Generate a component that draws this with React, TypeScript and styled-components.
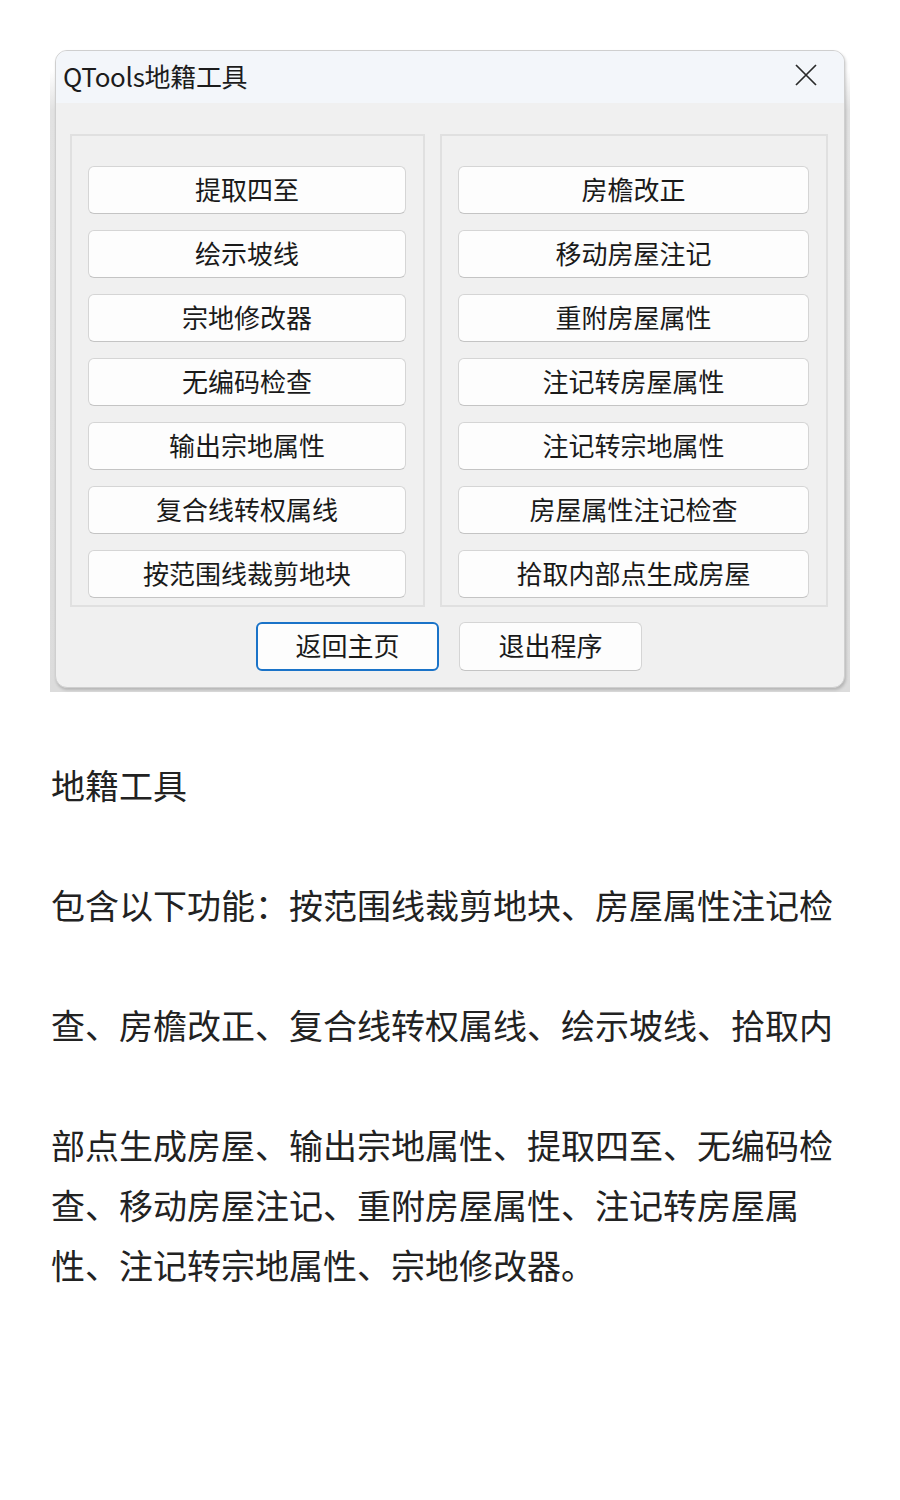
import styled, { createGlobalStyle } from 'styled-components';

const GlobalStyle = createGlobalStyle`
  html, body {
    margin: 0;
    padding: 0;
    background: #ffffff;
  }
  body {
    font-family: "Noto Sans CJK SC", "Noto Sans", sans-serif;
  }
`;

const Page = styled.div`
  padding: 50px 50px 0 50px;
`;

const Shot = styled.div`
  width: 800px;
  height: 642px;
  box-sizing: border-box;
  background: linear-gradient(to bottom, #ffffff 0, #ffffff 20px, #e2e2e2 60px, #dcdcdc 100%);
  padding: 0 5px 4px 5px;
`;

const Window = styled.div`
  height: 638px;
  box-sizing: border-box;
  background: #f0f0f0;
  border-radius: 12px;
  border: 1px solid #cfcfcf;
  box-shadow: 1px 2px 3px rgba(0, 0, 0, 0.18);
  overflow: hidden;
  display: flex;
  flex-direction: column;
`;

const TitleBar = styled.div`
  height: 52px;
  flex: none;
  background: #f3f6fa;
  display: flex;
  align-items: center;
  justify-content: space-between;
  padding: 0 26px 4px 7px;
  box-sizing: border-box;
`;

const Title = styled.div`
  font-size: 26px;
  color: #1c1c1c;
  letter-spacing: -0.3px;
`;

const CloseButton = styled.div`
  width: 24px;
  height: 24px;
  display: flex;
  align-items: center;
  justify-content: center;
`;

const Body = styled.div`
  flex: 1;
  padding: 31px 16px 0 14px;
  display: flex;
  flex-direction: column;
`;

const Groups = styled.div`
  display: grid;
  grid-template-columns: 355px 388px;
  gap: 15px;
`;

const Group = styled.div`
  height: 473px;
  box-sizing: border-box;
  border: 2px solid #e0e0e0;
  padding: 30px 17px 0 16px;
  display: flex;
  flex-direction: column;
  gap: 16px;
`;

const ToolButton = styled.div<{ $primary?: boolean }>`
  height: 48px;
  box-sizing: border-box;
  background: #fdfdfd;
  border: ${(p) => (p.$primary ? '2px solid #1a73c8' : '1px solid #d5d5d5')};
  border-bottom-color: ${(p) => (p.$primary ? '#1a73c8' : '#c4c4c4')};
  border-radius: 6px;
  display: flex;
  align-items: center;
  justify-content: center;
  padding-bottom: 4px;
  font-size: 26px;
  color: #1a1a1a;
`;

const Footer = styled.div`
  display: flex;
  justify-content: center;
  gap: 20px;
  margin-top: 15px;
`;

const FooterButton = styled(ToolButton)`
  width: 183px;
  height: 49px;
`;

const Article = styled.div`
  width: 800px;
  margin-top: 63px;
  padding-left: 1px;
  color: #222222;
  font-size: 34px;
  line-height: 60px;
`;

const Para = styled.p`
  margin: 0 0 60px 0;
`;

const leftTools = ['提取四至', '绘示坡线', '宗地修改器', '无编码检查', '输出宗地属性', '复合线转权属线', '按范围线裁剪地块'];
const rightTools = ['房檐改正', '移动房屋注记', '重附房屋属性', '注记转房屋属性', '注记转宗地属性', '房屋属性注记检查', '拾取内部点生成房屋'];

export default function App() {
  return (
    <>
      <GlobalStyle />
      <Page>
        <Shot>
          <Window>
            <TitleBar>
              <Title>QTools地籍工具</Title>
              <CloseButton>
                <svg width="24" height="24" viewBox="0 0 24 24">
                  <path d="M2 2 L22 22 M22 2 L2 22" stroke="#2a2a2a" strokeWidth="1.7" fill="none" />
                </svg>
              </CloseButton>
            </TitleBar>
            <Body>
              <Groups>
                <Group>
                  {leftTools.map((t) => (
                    <ToolButton key={t}>{t}</ToolButton>
                  ))}
                </Group>
                <Group>
                  {rightTools.map((t) => (
                    <ToolButton key={t}>{t}</ToolButton>
                  ))}
                </Group>
              </Groups>
              <Footer>
                <FooterButton $primary>返回主页</FooterButton>
                <FooterButton>退出程序</FooterButton>
              </Footer>
            </Body>
          </Window>
        </Shot>
        <Article>
          <Para>地籍工具</Para>
          <Para>包含以下功能：按范围线裁剪地块、房屋属性注记检</Para>
          <Para>查、房檐改正、复合线转权属线、绘示坡线、拾取内</Para>
          <Para>
            部点生成房屋、输出宗地属性、提取四至、无编码检查、移动房屋注记、重附房屋属性、注记转房屋属性、注记转宗地属性、宗地修改器。
          </Para>
        </Article>
      </Page>
    </>
  );
}
